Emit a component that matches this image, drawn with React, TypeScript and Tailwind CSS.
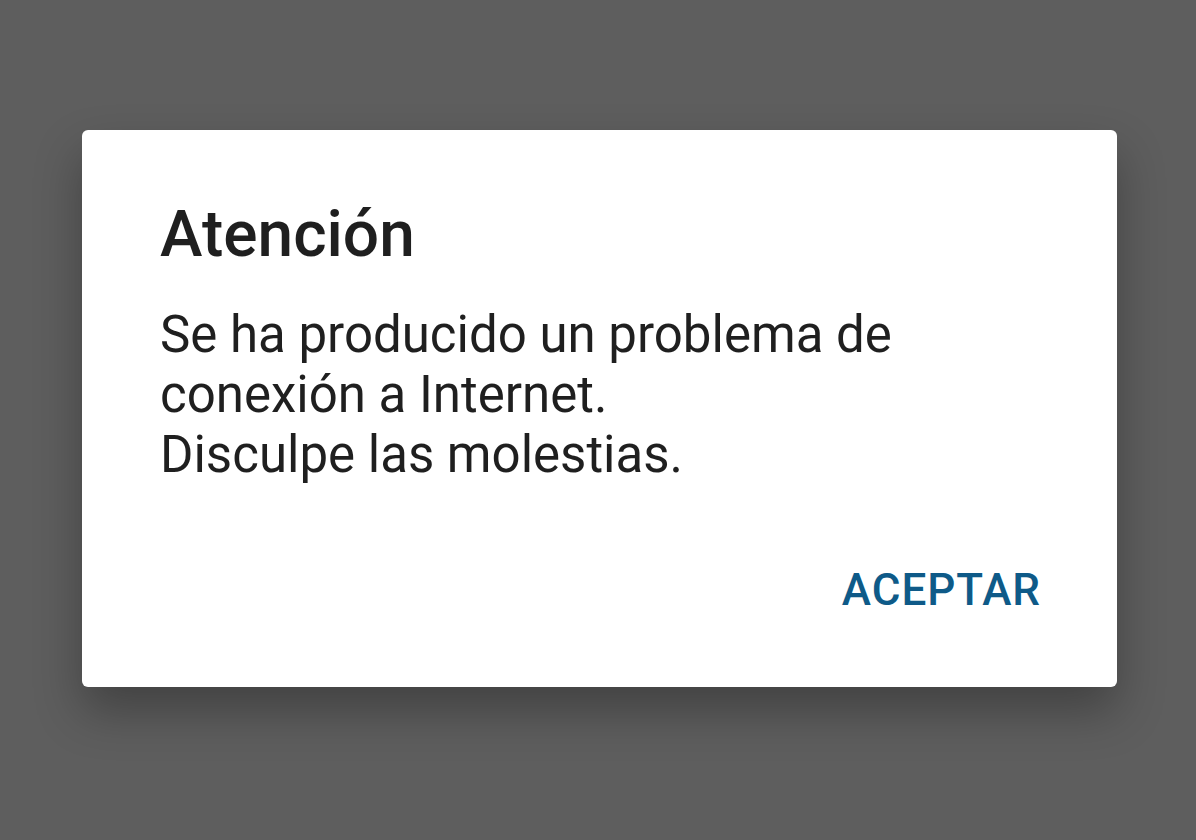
export default function App() {
  return (
    <div
      className="w-[1196px] h-[840px] bg-[#5e5e5e] overflow-hidden pt-[130px]"
      style={{ fontFamily: "Roboto, 'Noto Sans', sans-serif" }}
    >
      <div className="ml-[82px] w-[1035px] h-[557px] bg-white rounded-[6px] shadow-[0_24px_48px_rgba(0,0,0,0.3)] pt-[67px] pl-[78px] pr-[76px] flex flex-col">
        <h1 className="text-[64px] leading-[76px] font-medium text-[#1f1f1f]">Atención</h1>
        <p className="mt-[32px] text-[51px] leading-[60px] text-[#1f1f1f]">
          Se ha producido un problema de
          <br />
          conexión a Internet.
          <br />
          Disculpe las molestias.
        </p>
        <div className="mt-[79px] flex justify-end">
          <button className="text-[44px] leading-[52px] font-medium text-[#0e5a88] tracking-[1px]">
            ACEPTAR
          </button>
        </div>
      </div>
    </div>
  );
}
